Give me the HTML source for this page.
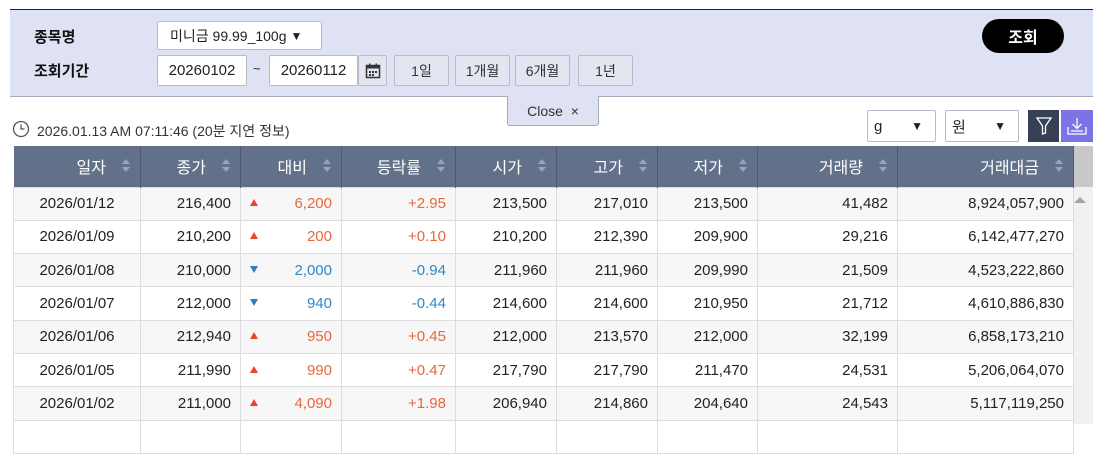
<!DOCTYPE html>
<html><head><meta charset="utf-8"><style>
*{box-sizing:border-box;margin:0;padding:0}
body{width:1103px;height:424px;background:#fff;font-family:"Liberation Sans","Noto Sans CJK KR",sans-serif;position:relative;overflow:hidden;color:#222}
.abs{position:absolute}
.panel{left:10px;top:9px;width:1083px;height:88px;background:#dfe2f2;border-top:1px solid #222;border-bottom:1px solid #a9acb8}
.lbl{font-size:15px;font-weight:bold;color:#111}
.box{background:#fff;border:1px solid #b9bcc8;border-radius:2px;font-size:14px;color:#222;display:flex;align-items:center}
.btn{background:#e3e5f0;border:1px solid #b9bcc8;border-radius:2px;font-size:14px;color:#333;display:flex;align-items:center;justify-content:center;height:31px;top:55px}
table{position:absolute;left:13px;top:146px;border-collapse:collapse;font-size:15px}
th{background:#637089;color:#fff;font-weight:normal;font-size:16px;height:41px;border-right:1px solid #4f5a70;text-align:right;padding-right:34px;position:relative}
th:after{content:"";position:absolute;right:10px;top:13px;border-left:4px solid transparent;border-right:4px solid transparent;border-bottom:5px solid #9aa4b8}
th:before{content:"";position:absolute;right:10px;top:21px;border-left:4px solid transparent;border-right:4px solid transparent;border-top:5px solid #9aa4b8}
td{height:33.3px;border:1px solid #ddd;text-align:right;padding-right:9px;color:#222}
tr:nth-child(even) td{background:#f7f7f7}
td.c{text-align:center;padding:0}
.up{color:#e8673c}.dn{color:#2f88c8}
.ti{display:inline-block;float:left;margin-left:9px;margin-top:4px;width:0;height:0;border-left:4px solid transparent;border-right:4px solid transparent}
.tu{border-bottom:7px solid #e8452a}.td{border-top:7px solid #2f7fc0}
</style></head><body>
<div class="abs panel"></div>
<div class="abs lbl" style="left:34px;top:26px">종목명</div>
<div class="abs lbl" style="left:34px;top:60px">조회기간</div>
<div class="abs box" style="left:157px;top:21px;width:165px;height:29px;padding-left:12px;border-radius:3px">미니금 99.99_100g <span style="font-size:12px;margin-left:4px">▼</span></div>
<div class="abs box" style="left:157px;top:55px;width:90px;height:31px;justify-content:center;font-size:15px">20260102</div>
<div class="abs" style="left:253px;top:61px;font-size:13px">~</div>
<div class="abs box" style="left:269px;top:55px;width:89px;height:31px;justify-content:center;font-size:15px">20260112</div>
<div class="abs btn" style="left:358px;width:29px">
<svg width="16" height="16" viewBox="0 0 16 16"><rect x="1.5" y="2.5" width="13" height="12" fill="none" stroke="#333" stroke-width="1.5"/><rect x="1.5" y="2.5" width="13" height="3" fill="#333"/><rect x="4" y="0.5" width="1.5" height="3" fill="#333"/><rect x="10.5" y="0.5" width="1.5" height="3" fill="#333"/><g fill="#333"><rect x="4" y="8" width="2" height="2"/><rect x="7" y="8" width="2" height="2"/><rect x="10" y="8" width="2" height="2"/><rect x="4" y="11" width="2" height="2"/><rect x="7" y="11" width="2" height="2"/></g></svg></div>
<div class="abs btn" style="left:394px;width:55px">1일</div>
<div class="abs btn" style="left:455px;width:55px">1개월</div>
<div class="abs btn" style="left:515px;width:55px">6개월</div>
<div class="abs btn" style="left:578px;width:55px">1년</div>
<div class="abs" style="left:982px;top:19px;width:82px;height:34px;background:#000;border-radius:17px;color:#fff;font-weight:bold;font-size:16px;display:flex;align-items:center;justify-content:center">조회</div>
<div class="abs" style="left:507px;top:96px;width:92px;height:30px;background:#dfe2f2;border:1px solid #a9acb8;border-top:none;border-radius:0 0 3px 3px;font-size:14px;color:#333;display:flex;align-items:center;justify-content:center">Close&nbsp;&nbsp;×</div>
<svg class="abs" style="left:12px;top:120px" width="18" height="18" viewBox="0 0 18 18"><circle cx="9" cy="9" r="7.5" fill="none" stroke="#555" stroke-width="1.3"/><path d="M9 4.5V9H12.5" fill="none" stroke="#555" stroke-width="1.3"/></svg>
<div class="abs" style="left:37px;top:121px;font-size:14px;color:#333">2026.01.13 AM 07:11:46 (20분 지연 정보)</div>
<div class="abs box" style="left:867px;top:110px;width:69px;height:32px;padding-left:6px;font-size:15px">g<span style="font-size:12px;position:absolute;right:12px">▼</span></div>
<div class="abs box" style="left:945px;top:110px;width:74px;height:32px;padding-left:6px;font-size:15px">원<span style="font-size:12px;position:absolute;right:12px">▼</span></div>
<div class="abs" style="left:1028px;top:110px;width:31px;height:32px;background:#364155;display:flex;align-items:center;justify-content:center">
<svg width="18" height="20" viewBox="0 0 18 20"><path d="M2 2H16L10.5 10V17L7.5 18V10Z" fill="none" stroke="#fff" stroke-width="1.3"/></svg></div>
<div class="abs" style="left:1061px;top:110px;width:32px;height:32px;background:#7b74e6;display:flex;align-items:center;justify-content:center">
<svg width="22" height="20" viewBox="0 0 22 20"><path d="M11 2V12M6.5 8L11 12.5 15.5 8M2 11V18H20V11M5 15H17" fill="none" stroke="#fff" stroke-width="1.3"/></svg></div>
<div class="abs" style="left:1073px;top:146px;width:20px;height:278px;background:#f1f1f1"></div>
<div class="abs" style="left:1073px;top:146px;width:20px;height:41px;background:#c8c8c8"></div>
<div class="abs" style="left:1074px;top:197px;border-left:6px solid transparent;border-right:6px solid transparent;border-bottom:6px solid #a3a3a3"></div>
<table>
<tr><th style="width:127px">일자</th><th style="width:100px">종가</th><th style="width:101px">대비</th><th style="width:114px">등락률</th><th style="width:101px">시가</th><th style="width:101px">고가</th><th style="width:100px">저가</th><th style="width:140px">거래량</th><th style="width:176px">거래대금</th></tr>
<tr><td class="c">2026/01/12</td><td>216,400</td><td class="up"><i class="ti tu"></i>6,200</td><td class="up">+2.95</td><td>213,500</td><td>217,010</td><td>213,500</td><td>41,482</td><td>8,924,057,900</td></tr>
<tr><td class="c">2026/01/09</td><td>210,200</td><td class="up"><i class="ti tu"></i>200</td><td class="up">+0.10</td><td>210,200</td><td>212,390</td><td>209,900</td><td>29,216</td><td>6,142,477,270</td></tr>
<tr><td class="c">2026/01/08</td><td>210,000</td><td class="dn"><i class="ti td"></i>2,000</td><td class="dn">-0.94</td><td>211,960</td><td>211,960</td><td>209,990</td><td>21,509</td><td>4,523,222,860</td></tr>
<tr><td class="c">2026/01/07</td><td>212,000</td><td class="dn"><i class="ti td"></i>940</td><td class="dn">-0.44</td><td>214,600</td><td>214,600</td><td>210,950</td><td>21,712</td><td>4,610,886,830</td></tr>
<tr><td class="c">2026/01/06</td><td>212,940</td><td class="up"><i class="ti tu"></i>950</td><td class="up">+0.45</td><td>212,000</td><td>213,570</td><td>212,000</td><td>32,199</td><td>6,858,173,210</td></tr>
<tr><td class="c">2026/01/05</td><td>211,990</td><td class="up"><i class="ti tu"></i>990</td><td class="up">+0.47</td><td>217,790</td><td>217,790</td><td>211,470</td><td>24,531</td><td>5,206,064,070</td></tr>
<tr><td class="c">2026/01/02</td><td>211,000</td><td class="up"><i class="ti tu"></i>4,090</td><td class="up">+1.98</td><td>206,940</td><td>214,860</td><td>204,640</td><td>24,543</td><td>5,117,119,250</td></tr>
<tr><td class="c"></td><td></td><td></td><td></td><td></td><td></td><td></td><td></td><td></td></tr>
</table>
</body></html>
